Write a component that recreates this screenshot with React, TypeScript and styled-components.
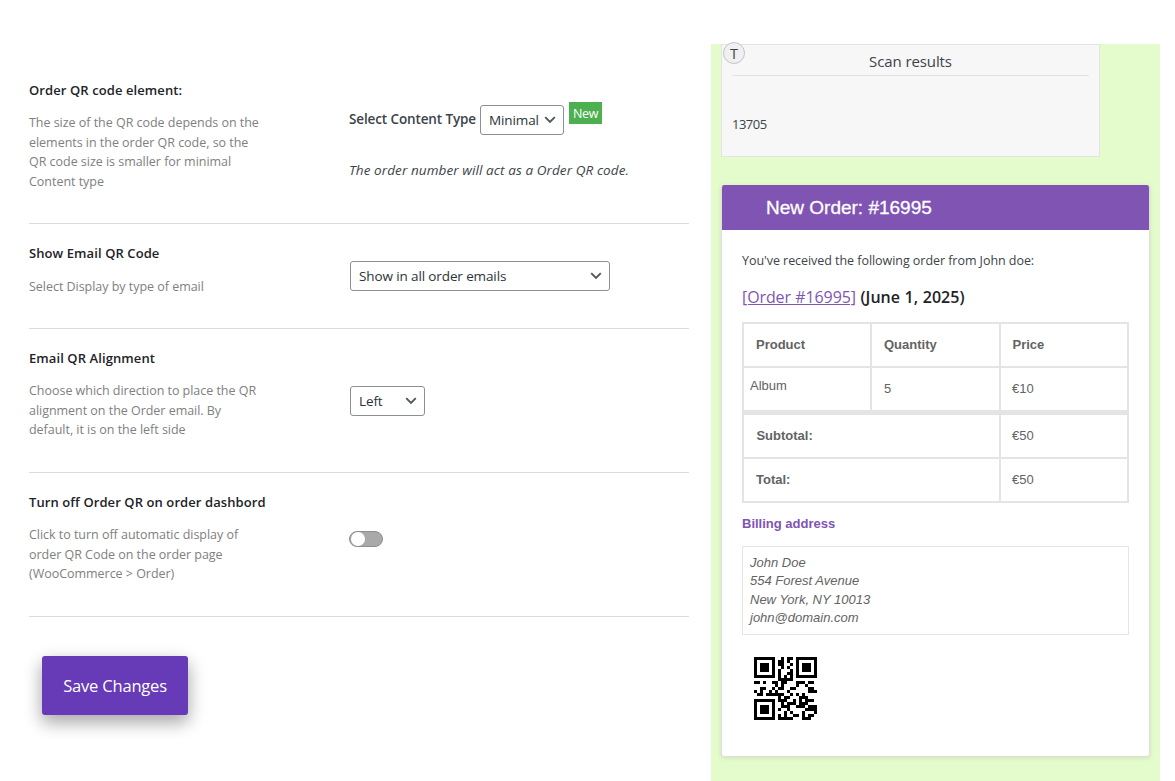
import React, { useMemo, useState } from 'react';
import styled, { createGlobalStyle } from 'styled-components';

const ui = `'Segoe UI', 'Open Sans', 'Noto Sans', sans-serif`;
const mail = `'Liberation Sans', Arial, Helvetica, sans-serif`;

const GlobalStyle = createGlobalStyle`
  *, *::before, *::after { box-sizing: border-box; }
  body { margin: 0; background: #fff; font-family: ${ui}; font-size: 13px; color: #3c434a; overflow: hidden; }
  h1, h2, h3, p, address { margin: 0; font-weight: normal; }
`;

/* ---------- QR code (version 1, level L, mask 7, numeric) ---------- */

const SIZE = 21;

function encodeDigits(text: string): number[] {
  const bits: number[] = [];
  const push = (value: number, length: number) => {
    for (let i = length - 1; i >= 0; i--) bits.push((value >> i) & 1);
  };
  push(1, 4);
  push(text.length, 10);
  for (let i = 0; i < text.length; i += 3) {
    const part = text.slice(i, i + 3);
    push(Number(part), part.length * 3 + 1);
  }
  push(0, 4);
  while (bits.length % 8) bits.push(0);
  const bytes: number[] = [];
  for (let i = 0; i < bits.length; i += 8) bytes.push(parseInt(bits.slice(i, i + 8).join(''), 2));
  for (let pad = 0xec; bytes.length < 19; pad ^= 0xec ^ 0x11) bytes.push(pad);
  return bytes;
}

function multiply(a: number, b: number): number {
  let z = 0;
  for (let i = 7; i >= 0; i--) {
    z = (z << 1) ^ ((z >>> 7) * 0x11d);
    z ^= ((b >>> i) & 1) * a;
  }
  return z;
}

function errorCorrection(data: number[], degree: number): number[] {
  const divisor = new Array<number>(degree).fill(0);
  divisor[degree - 1] = 1;
  let root = 1;
  for (let i = 0; i < degree; i++) {
    for (let j = 0; j < degree; j++) {
      divisor[j] = multiply(divisor[j], root);
      if (j + 1 < degree) divisor[j] ^= divisor[j + 1];
    }
    root = multiply(root, 2);
  }
  const rest = new Array<number>(degree).fill(0);
  data.forEach((byte) => {
    const factor = byte ^ (rest.shift() as number);
    rest.push(0);
    divisor.forEach((c, i) => { rest[i] ^= multiply(c, factor); });
  });
  return rest;
}

function buildMatrix(text: string): boolean[][] {
  const grid: (boolean | null)[][] = Array.from({ length: SIZE }, () => new Array(SIZE).fill(null));
  const finder = (top: number, left: number) => {
    for (let y = -1; y <= 7; y++) {
      for (let x = -1; x <= 7; x++) {
        if (!grid[top + y] || left + x < 0 || left + x >= SIZE) continue;
        const ring = Math.max(Math.abs(y - 3), Math.abs(x - 3));
        grid[top + y][left + x] = ring !== 2 && ring !== 4;
      }
    }
  };
  finder(0, 0);
  finder(0, SIZE - 7);
  finder(SIZE - 7, 0);
  for (let i = 8; i < 13; i++) {
    grid[6][i] = i % 2 === 0;
    grid[i][6] = i % 2 === 0;
  }
  const format = '110100101110110'.split('').map((b) => b === '1');
  const first = [[8, 0], [8, 1], [8, 2], [8, 3], [8, 4], [8, 5], [8, 7], [8, 8], [7, 8], [5, 8], [4, 8], [3, 8], [2, 8], [1, 8], [0, 8]];
  format.forEach((bit, i) => {
    grid[first[i][0]][first[i][1]] = bit;
    if (i < 7) grid[SIZE - 1 - i][8] = bit;
    else grid[8][SIZE - 15 + i] = bit;
  });
  grid[SIZE - 8][8] = true;

  const data = encodeDigits(text);
  const codewords = data.concat(errorCorrection(data, 7));
  let index = 0;
  let upward = true;
  for (let right = SIZE - 1; right > 0; right -= 2) {
    if (right === 6) right = 5;
    for (let step = 0; step < SIZE; step++) {
      const y = upward ? SIZE - 1 - step : step;
      for (let x = right; x > right - 2; x--) {
        if (grid[y][x] !== null) continue;
        const bit = ((codewords[index >> 3] ?? 0) >> (7 - (index & 7))) & 1;
        const flip = (((y + x) % 2) + ((y * x) % 3)) % 2 === 0;
        grid[y][x] = (bit === 1) !== flip;
        index++;
      }
    }
    upward = !upward;
  }
  return grid as boolean[][];
}

const QrSvg = styled.svg`
  display: block;
  width: 63px;
  height: 63px;
  margin: 22px 0 0 12px;
`;

function QrCode({ value }: { value: string }) {
  const path = useMemo(
    () => buildMatrix(value).map((row, y) => row.map((on, x) => (on ? `M${x} ${y}h1v1h-1z` : '')).join('')).join(''),
    [value],
  );
  return (
    <QrSvg viewBox="0 0 21 21" shapeRendering="crispEdges" role="img" aria-label="Order QR code">
      <path d={path} fill="#000" />
    </QrSvg>
  );
}

/* ---------- Settings column ---------- */

const Page = styled.div`
  display: flex;
  width: 1175px;
  height: 781px;
  overflow: hidden;
`;

const Settings = styled.main`
  width: 660px;
  margin: 60px 22px 0 29px;
  flex: none;
`;

const Setting = styled.section<{ $height: number }>`
  display: grid;
  grid-template-columns: 320px 1fr;
  height: ${(p) => p.$height}px;
  border-bottom: 1px solid #dcdcde;
`;

const SettingTitle = styled.h3<{ $top?: number }>`
  padding-top: ${(p) => p.$top ?? 19}px;
  font-size: 13px;
  line-height: 20px;
  font-weight: 600;
  color: #1d2327;
  white-space: nowrap;
  letter-spacing: 0.09px;
`;

const Description = styled.p<{ $gap?: number }>`
  margin-top: ${(p) => p.$gap ?? 13}px;
  font-size: 12.5px;
  line-height: 19.5px;
  color: #808080;
  white-space: pre-line;
  letter-spacing: -0.03px;
`;

const Control = styled.div<{ $top: number; $left?: number }>`
  padding: ${(p) => p.$top}px 0 0 ${(p) => p.$left ?? 0}px;
`;

const Inline = styled.div`
  display: flex;
  align-items: flex-start;
`;

const FieldLabel = styled.label`
  width: 131px;
  font-size: 13.5px;
  line-height: 28px;
  font-weight: 600;
  white-space: nowrap;
  letter-spacing: -0.12px;
`;

const SelectBox = styled.button<{ $width: number }>`
  display: flex;
  align-items: center;
  justify-content: space-between;
  width: ${(p) => p.$width}px;
  height: 30px;
  padding: 0 7px 0 8px;
  border: 1px solid #8c8f94;
  border-radius: 3px;
  background: #fff;
  font: 13.5px/28px ${ui};
  letter-spacing: -0.12px;
  color: #2c3338;
  white-space: nowrap;
`;

const NewBadge = styled.span`
  width: 33px;
  height: 22px;
  margin: -3px 0 0 5px;
  background: #4caf50;
  color: #fff;
  font-size: 12.5px;
  line-height: 24px;
  text-align: center;
  letter-spacing: -0.4px;
`;

const Hint = styled.p`
  margin-top: 25px;
  font-size: 13.5px;
  line-height: 20px;
  font-style: italic;
  white-space: nowrap;
  letter-spacing: 0.09px;
`;

const Toggle = styled.button<{ $on: boolean }>`
  display: flex;
  justify-content: ${(p) => (p.$on ? 'flex-end' : 'flex-start')};
  width: 34px;
  height: 16px;
  padding: 0 0.5px;
  border: 1px solid #8e8e8e;
  border-radius: 8px;
  background: #a9a9a9;

  &::before {
    content: '';
    width: 14px;
    height: 14px;
    border-radius: 50%;
    background: #fff;
  }
`;

const SaveButton = styled.button`
  display: block;
  width: 146px;
  height: 59px;
  margin: 39px 0 0 13px;
  padding: 0;
  border: 0;
  border-radius: 3px;
  background: #673ab7;
  color: #fff;
  font: 16.5px/59px ${ui};
  letter-spacing: -0.18px;
  box-shadow: 0 8px 16px rgba(0, 0, 0, 0.2), 0 6px 20px rgba(0, 0, 0, 0.19);
`;

function Select({ value, width }: { value: string; width: number }) {
  return (
    <SelectBox type="button" $width={width}>
      {value}
      <svg width="12" height="8" viewBox="0 0 12 8" fill="none">
        <path d="M1.2 1.2L6 6L10.8 1.2" stroke="#50575e" strokeWidth="1.9" />
      </svg>
    </SelectBox>
  );
}

/* ---------- Preview column ---------- */

const Preview = styled.aside`
  width: 449px;
  height: 737px;
  margin-top: 44px;
  padding-left: 10px;
  background: #e4fbcb;
`;

const ScanBox = styled.section`
  position: relative;
  width: 379px;
  height: 113px;
  padding: 0 10px;
  border: 1px solid #e3e3e3;
  background: #f7f7f7;
`;

const Marker = styled.span`
  position: absolute;
  top: -3px;
  left: 1px;
  width: 22px;
  height: 22px;
  border: 1px solid #c3c4c7;
  border-radius: 50%;
  background: #f0f0f1;
  font-size: 14.5px;
  line-height: 21px;
  text-align: center;
`;

const ScanTitle = styled.h2`
  height: 31px;
  border-bottom: 1px solid #e2e2e2;
  font-size: 15px;
  line-height: 33px;
  text-align: center;
  letter-spacing: -0.1px;
`;

const ScanValue = styled.p`
  margin-top: 38px;
  line-height: 20px;
  letter-spacing: -0.5px;
`;

const Card = styled.article`
  width: 429px;
  height: 572px;
  margin-top: 28px;
  border: 1px solid #dedede;
  border-top: 0;
  border-radius: 3px;
  background: #fff;
  box-shadow: 0 1px 4px rgba(0, 0, 0, 0.1);
  overflow: hidden;
`;

const CardHeader = styled.h1`
  height: 45px;
  padding-left: 44px;
  background: #7f54b3;
  color: #fff;
  font: 19px/45px ${mail};
  -webkit-text-stroke: 0.3px #fff;
`;

const CardBody = styled.div`
  padding: 21px 20px 0;
`;

const Intro = styled.p`
  font-size: 12.5px;
  line-height: 20px;
  white-space: nowrap;
  letter-spacing: -0.05px;
`;

const OrderTitle = styled.h2`
  margin-top: 15px;
  font-size: 16px;
  line-height: 22px;
  font-weight: 600;
  color: #1d2327;
  white-space: nowrap;
  letter-spacing: 0.05px;
  word-spacing: 0.3px;
`;

const OrderLink = styled.a`
  font-weight: 400;
  color: #7f54b3;
  text-decoration: underline;
  letter-spacing: -0.1px;
`;

const OrderTable = styled.div`
  display: grid;
  grid-template-columns: 126px 127px 126px;
  grid-auto-rows: 42px;
  gap: 2px;
  width: 387px;
  margin-top: 14px;
  padding: 2px;
  background: #e4e4e4;
`;

const Totals = styled(OrderTable)`
  grid-template-columns: 255px 126px;
  margin-top: 1px;
  box-shadow: 0 -1px 0 #e4e4e4;
`;

const Cell = styled.div<{ $head?: boolean; $indent?: number; $lift?: number }>`
  padding: 0 0 0 ${(p) => p.$indent ?? 12}px;
  background: #fff;
  color: #636363;
  font: ${(p) => (p.$head ? 'bold' : 'normal')} 13px / ${(p) => 42 - (p.$lift ?? 0)}px ${mail};
`;

const BillingTitle = styled.h3`
  margin-top: 11px;
  color: #7f54b3;
  font: bold 13px/20px ${mail};
`;

const Address = styled.address`
  width: 387px;
  height: 89px;
  margin-top: 12px;
  padding: 7px;
  border: 1px solid #e5e5e5;
  color: #636363;
  font: italic 13px/18.3px ${mail};
  white-space: pre-line;
`;

export default function App() {
  const [hidden, setHidden] = useState(false);
  return (
    <Page>
      <GlobalStyle />
      <Settings>
        <Setting $height={164}>
          <div>
            <SettingTitle $top={20}>Order QR code element:</SettingTitle>
            <Description>{'The size of the QR code depends on the\nelements in the order QR code, so the\nQR code size is smaller for minimal\nContent type'}</Description>
          </div>
          <Control $top={45}>
            <Inline>
              <FieldLabel>Select Content Type</FieldLabel>
              <Select value="Minimal" width={84} />
              <NewBadge>New</NewBadge>
            </Inline>
            <Hint>The order number will act as a Order QR code.</Hint>
          </Control>
        </Setting>
        <Setting $height={105}>
          <div>
            <SettingTitle>Show Email QR Code</SettingTitle>
            <Description $gap={14}>Select Display by type of email</Description>
          </div>
          <Control $top={37} $left={1}>
            <Select value="Show in all order emails" width={260} />
          </Control>
        </Setting>
        <Setting $height={144}>
          <div>
            <SettingTitle>Email QR Alignment</SettingTitle>
            <Description>{'Choose which direction to place the QR\nalignment on the Order email. By\ndefault, it is on the left side'}</Description>
          </div>
          <Control $top={57} $left={1}>
            <Select value="Left" width={75} />
          </Control>
        </Setting>
        <Setting $height={144}>
          <div>
            <SettingTitle>Turn off Order QR on order dashbord</SettingTitle>
            <Description>{'Click to turn off automatic display of\norder QR Code on the order page\n(WooCommerce > Order)'}</Description>
          </div>
          <Control $top={58}>
            <Toggle type="button" role="switch" aria-checked={hidden} $on={hidden} onClick={() => setHidden(!hidden)} />
          </Control>
        </Setting>
        <SaveButton type="button">Save Changes</SaveButton>
      </Settings>

      <Preview>
        <ScanBox>
          <Marker>T</Marker>
          <ScanTitle>Scan results</ScanTitle>
          <ScanValue>13705</ScanValue>
        </ScanBox>
        <Card>
          <CardHeader>New Order: #16995</CardHeader>
          <CardBody>
            <Intro>You've received the following order from John doe:</Intro>
            <OrderTitle>
              <OrderLink>[Order #16995]</OrderLink> (June 1, 2025)
            </OrderTitle>
            <OrderTable>
              <Cell $head>Product</Cell>
              <Cell $head>Quantity</Cell>
              <Cell $head $indent={11.5}>Price</Cell>
              <Cell $indent={6} $lift={6}>Album</Cell>
              <Cell>5</Cell>
              <Cell $indent={11}>€10</Cell>
            </OrderTable>
            <Totals>
              <Cell $head $indent={12.4}>Subtotal:</Cell>
              <Cell $indent={11}>€50</Cell>
              <Cell $head>Total:</Cell>
              <Cell $indent={11}>€50</Cell>
            </Totals>
            <BillingTitle>Billing address</BillingTitle>
            <Address>{'John Doe\n554 Forest Avenue\nNew York, NY 10013\njohn@domain.com'}</Address>
            <QrCode value="13705" />
          </CardBody>
        </Card>
      </Preview>
    </Page>
  );
}
